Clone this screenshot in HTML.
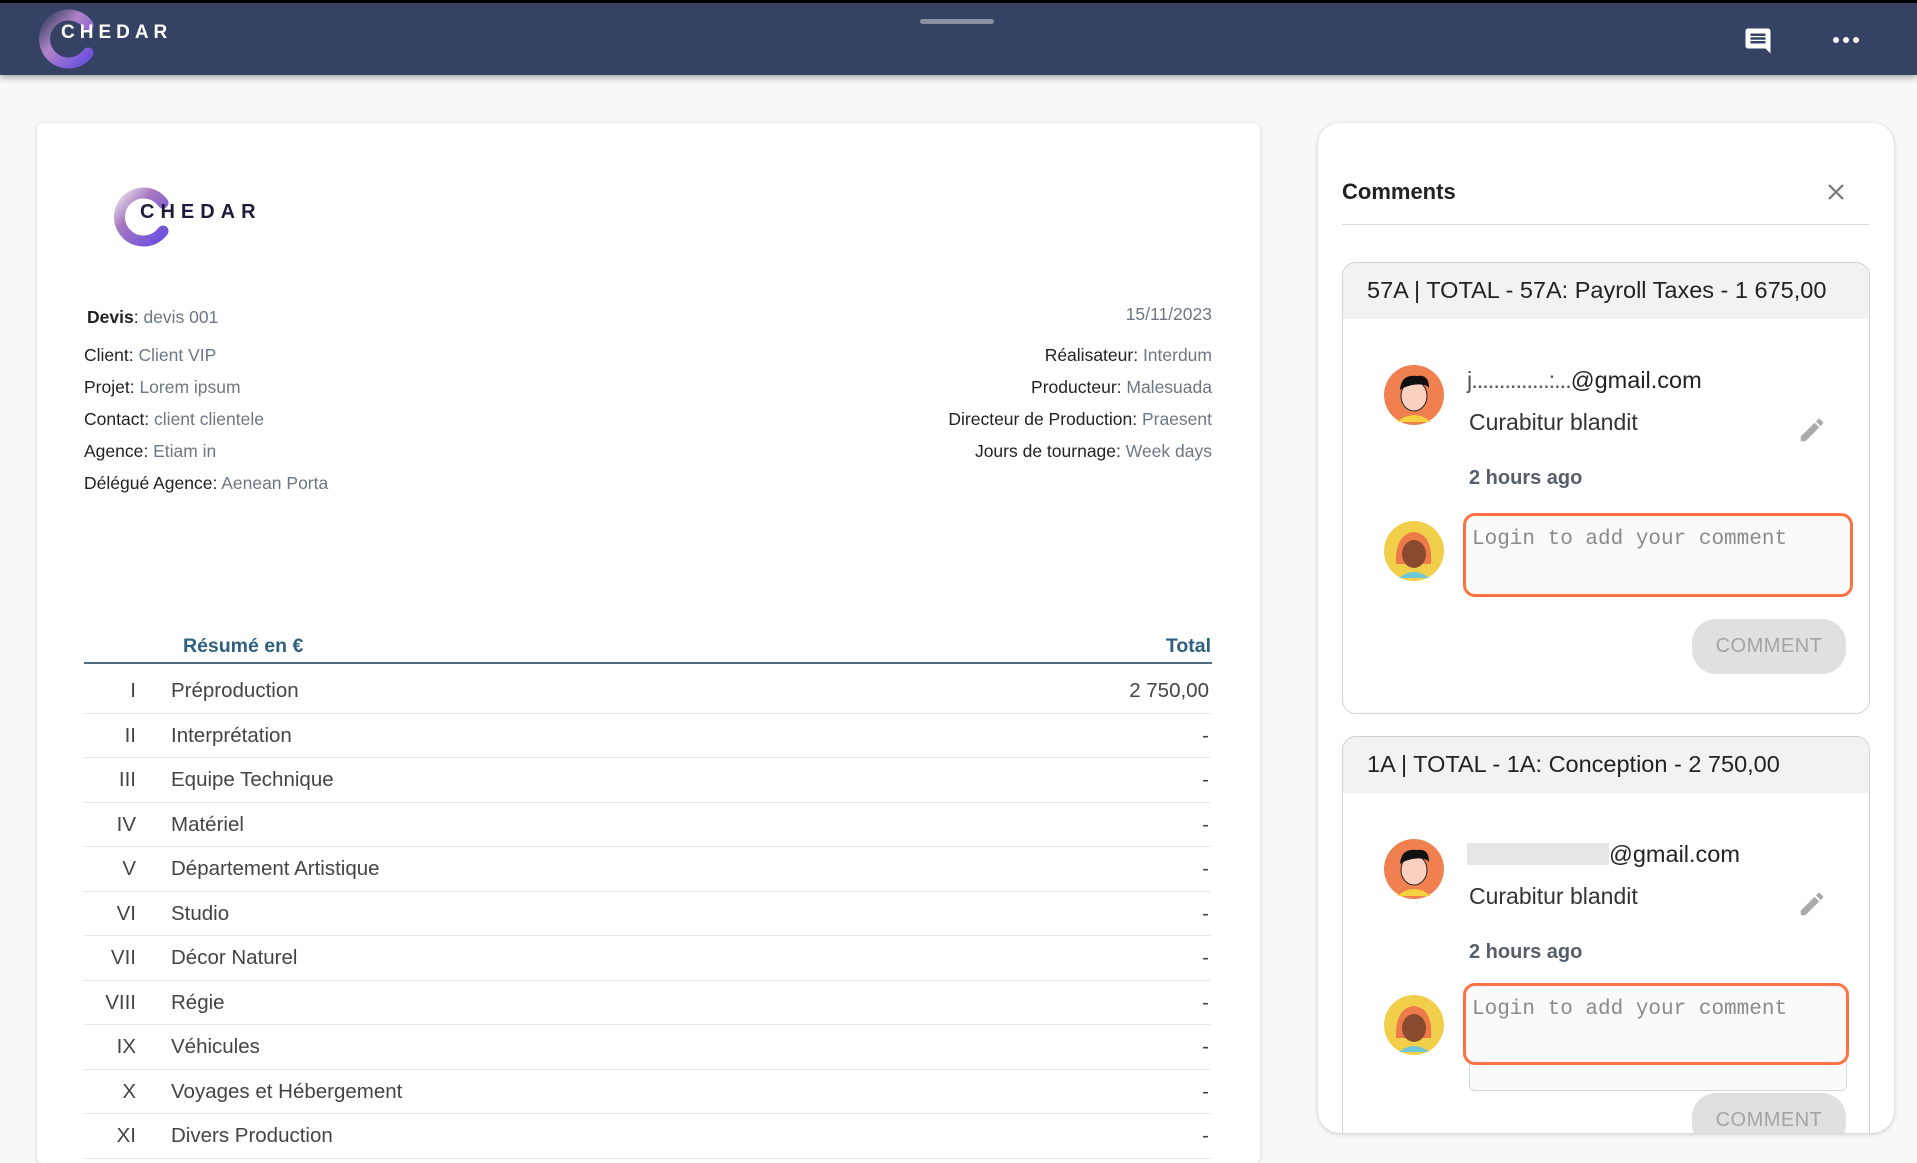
<!DOCTYPE html>
<html><head><meta charset="utf-8"><style>
*{margin:0;padding:0;box-sizing:border-box}
body{width:1917px;height:1142px;overflow:hidden;background:#f8f8f8;font-family:"Liberation Sans",Arial,sans-serif;position:relative;color:#222}
.a{position:absolute;white-space:nowrap}
.hdr{position:absolute;left:0;top:0;width:1917px;height:75px;background:#364263;border-top:3px solid #000;box-shadow:0 3px 6px rgba(0,0,0,.3)}
.card{position:absolute;left:37px;top:123px;width:1223px;height:1040px;background:#fff;border-radius:6px;box-shadow:0 1px 4px rgba(0,0,0,.15)}
.meta{font-size:17.5px;color:#222}
.meta span{color:#6b7785}
.row{position:absolute;left:84px;width:1127px;height:44.5px;border-bottom:1px solid #e6e6e6;font-size:20.5px;color:#444}
.row .n{position:absolute;right:1075px;top:10px}
.row .l{position:absolute;left:87px;top:10px}
.row .t{position:absolute;right:2px;top:10px}
.panel{position:absolute;left:1318px;top:123px;width:576px;height:1010px;background:#fff;border-radius:22px;box-shadow:0 1px 5px rgba(0,0,0,.2);overflow:hidden}
.cc{position:absolute;left:24px;width:528px;height:452px;border:1px solid #d0d0d0;border-radius:14px;overflow:hidden;background:#fff}
.ch{height:56px;background:#f2f2f2;font-size:23.5px;padding:14px 0 0 24px;color:#222}
.inp{position:absolute;left:120px;width:390px;height:84px;border:3.5px solid #ff7043;border-radius:12px;background:#fafafa;font-family:"Liberation Mono",monospace;font-size:21px;color:#8a8a8a;padding:12px 0 0 6px}
.btn{position:absolute;left:349px;width:154px;height:55px;border-radius:24px;background:#e0e0e0;color:#a4a4a4;font-size:20px;text-align:center;line-height:55px;letter-spacing:.5px}
</style></head><body>
<div class="hdr">
 <svg class="a" style="left:36px;top:4px" width="60" height="64" viewBox="0 0 60 64"><defs><linearGradient id="g1" x1="0" y1="0" x2="1" y2="1"><stop offset="0" stop-color="#3a4466"/><stop offset=".4" stop-color="#b083c8"/><stop offset="1" stop-color="#6a4fe0"/></linearGradient></defs><path d="M52 18 A24 24 0 1 0 52 46" fill="none" stroke="url(#g1)" stroke-width="11" stroke-linecap="round"/></svg>
 <div class="a" style="left:61px;top:19px;color:#fff;font-size:19px;font-weight:bold;letter-spacing:5px">CHEDAR</div>
 <div class="a" style="left:920px;top:16px;width:74px;height:5px;border-radius:3px;background:#8a90a0"></div>
 <svg class="a" style="left:1743px;top:23px" width="30" height="30" viewBox="0 0 24 24"><path fill="#fff" d="M21.99 4c0-1.1-.89-2-1.99-2H4c-1.1 0-2 .9-2 2v12c0 1.1.9 2 2 2h14l4 4-.01-18zM18 14H6v-2h12v2zm0-3H6V9h12v2zm0-3H6V6h12v2z"/></svg>
 <svg class="a" style="left:1832px;top:32px" width="28" height="10"><circle cx="4" cy="5" r="3" fill="#fff"/><circle cx="14" cy="5" r="3" fill="#fff"/><circle cx="24" cy="5" r="3" fill="#fff"/></svg>
</div>

<div class="card">
 <svg class="a" style="left:71px;top:62px" width="66" height="64" viewBox="0 0 60 64"><defs><linearGradient id="g2" x1="0" y1="0" x2="1" y2="1"><stop offset="0" stop-color="#e8e0f0"/><stop offset=".35" stop-color="#a878c0"/><stop offset="1" stop-color="#6a4fe0"/></linearGradient></defs><path d="M52 18 A24 24 0 1 0 52 46" fill="none" stroke="url(#g2)" stroke-width="11" stroke-linecap="round"/></svg>
 <div class="a" style="left:103px;top:78px;color:#1e1a3a;font-size:20px;font-weight:bold;letter-spacing:6px">CHEDAR</div>
 <div class="a meta" style="left:50px;top:184px"><b>Devis</b>: <span>devis 001</span></div>
 <div class="a meta" style="left:47px;top:222px">Client: <span>Client VIP</span></div>
 <div class="a meta" style="left:47px;top:254px">Projet: <span>Lorem ipsum</span></div>
 <div class="a meta" style="left:47px;top:286px">Contact: <span>client clientele</span></div>
 <div class="a meta" style="left:47px;top:318px">Agence: <span>Etiam in</span></div>
 <div class="a meta" style="left:47px;top:350px">Délégué Agence: <span>Aenean Porta</span></div>
 <div class="a meta" style="right:48px;top:181px"><span>15/11/2023</span></div>
 <div class="a meta" style="right:48px;top:222px">Réalisateur: <span>Interdum</span></div>
 <div class="a meta" style="right:48px;top:254px">Producteur: <span>Malesuada</span></div>
 <div class="a meta" style="right:48px;top:286px">Directeur de Production: <span>Praesent</span></div>
 <div class="a meta" style="right:48px;top:318px">Jours de tournage: <span>Week days</span></div>
 <div class="a" style="left:146px;top:512px;font-size:19.5px;font-weight:bold;color:#2f6080">Résumé en €</div>
 <div class="a" style="right:49px;top:512px;font-size:19.5px;font-weight:bold;color:#2f6080">Total</div>
 <div class="a" style="left:47px;top:539px;width:1128px;height:2px;background:#4d6a80"></div>
 <div style="position:absolute;left:-37px;top:546px">
 <div class="row" style="top:0"><span class="n">I</span><span class="l">Préproduction</span><span class="t">2 750,00</span></div>
 <div class="row" style="top:44.5px"><span class="n">II</span><span class="l">Interprétation</span><span class="t">-</span></div>
 <div class="row" style="top:89px"><span class="n">III</span><span class="l">Equipe Technique</span><span class="t">-</span></div>
 <div class="row" style="top:133.5px"><span class="n">IV</span><span class="l">Matériel</span><span class="t">-</span></div>
 <div class="row" style="top:178px"><span class="n">V</span><span class="l">Département Artistique</span><span class="t">-</span></div>
 <div class="row" style="top:222.5px"><span class="n">VI</span><span class="l">Studio</span><span class="t">-</span></div>
 <div class="row" style="top:267px"><span class="n">VII</span><span class="l">Décor Naturel</span><span class="t">-</span></div>
 <div class="row" style="top:311.5px"><span class="n">VIII</span><span class="l">Régie</span><span class="t">-</span></div>
 <div class="row" style="top:356px"><span class="n">IX</span><span class="l">Véhicules</span><span class="t">-</span></div>
 <div class="row" style="top:400.5px"><span class="n">X</span><span class="l">Voyages et Hébergement</span><span class="t">-</span></div>
 <div class="row" style="top:445px"><span class="n">XI</span><span class="l">Divers Production</span><span class="t">-</span></div>
 </div>
</div>

<div class="panel">
 <div class="a" style="left:24px;top:56px;font-size:22px;font-weight:bold;color:#222">Comments</div>
 <svg class="a" style="left:508px;top:59px" width="20" height="20"><path d="M3 3L17 17M17 3L3 17" stroke="#777" stroke-width="2.2"/></svg>
 <div class="a" style="left:24px;top:101px;width:527px;height:1px;background:#d8d8d8"></div>

 <div class="cc" style="top:139px">
  <div class="ch">57A | TOTAL - 57A: Payroll Taxes - 1 675,00</div>
  <svg class="a" style="left:40px;top:101px" width="62" height="62"><circle cx="31" cy="31" r="30" fill="#f08050"/><path d="M14 58 Q31 44 48 58" fill="#f5d040"/><ellipse cx="31" cy="32" rx="13" ry="15" fill="#fbd0c0" stroke="#222"/><path d="M17 26 Q18 10 34 12 Q46 10 46 24 L44 22 Q34 18 20 24Z" fill="#111"/></svg>
  <div class="a" style="left:124px;top:104px;font-size:23.5px;color:#222"><span style="color:#555;letter-spacing:-1px">j..............:...</span>@gmail.com</div>
  <div class="a" style="left:126px;top:146px;font-size:23px;color:#333">Curabitur blandit</div>
  <svg class="a" style="left:454px;top:152px" width="30" height="30" viewBox="0 0 24 24"><path fill="#aaa" d="M3 17.25V21h3.75L17.81 9.94l-3.75-3.75L3 17.25zM20.71 7.04a1 1 0 0 0 0-1.41l-2.34-2.34a1 1 0 0 0-1.41 0l-1.83 1.83 3.75 3.75 1.83-1.83z"/></svg>
  <div class="a" style="left:126px;top:204px;font-size:20px;font-weight:bold;color:#555f6c">2 hours ago</div>
  <svg class="a" style="left:40px;top:257px" width="62" height="62"><circle cx="31" cy="31" r="30" fill="#f2cf4a"/><path d="M16 58 Q31 46 46 58" fill="#6cc8d8"/><path d="M13 44 Q12 14 31 12 Q50 14 48 44Z" fill="#ee7a4a"/><ellipse cx="31" cy="34" rx="12" ry="14" fill="#8a4a30"/></svg>
  <div class="inp" style="top:250px">Login to add your comment</div>
  <div class="btn" style="top:356px">COMMENT</div>
 </div>

 <div class="cc" style="top:613px;height:460px">
  <div class="ch">1A | TOTAL - 1A: Conception - 2 750,00</div>
  <svg class="a" style="left:40px;top:101px" width="62" height="62"><circle cx="31" cy="31" r="30" fill="#f08050"/><path d="M14 58 Q31 44 48 58" fill="#f5d040"/><ellipse cx="31" cy="32" rx="13" ry="15" fill="#fbd0c0" stroke="#222"/><path d="M17 26 Q18 10 34 12 Q46 10 46 24 L44 22 Q34 18 20 24Z" fill="#111"/></svg>
  <div class="a" style="left:124px;top:104px;font-size:23.5px;color:#222"><span style="display:inline-block;width:142px;height:22px;background:#e6e6e6;vertical-align:-3px"></span>@gmail.com</div>
  <div class="a" style="left:126px;top:146px;font-size:23px;color:#333">Curabitur blandit</div>
  <svg class="a" style="left:454px;top:152px" width="30" height="30" viewBox="0 0 24 24"><path fill="#aaa" d="M3 17.25V21h3.75L17.81 9.94l-3.75-3.75L3 17.25zM20.71 7.04a1 1 0 0 0 0-1.41l-2.34-2.34a1 1 0 0 0-1.41 0l-1.83 1.83 3.75 3.75 1.83-1.83z"/></svg>
  <div class="a" style="left:126px;top:204px;font-size:20px;font-weight:bold;color:#555f6c">2 hours ago</div>
  <svg class="a" style="left:40px;top:257px" width="62" height="62"><circle cx="31" cy="31" r="30" fill="#f2cf4a"/><path d="M16 58 Q31 46 46 58" fill="#6cc8d8"/><path d="M13 44 Q12 14 31 12 Q50 14 48 44Z" fill="#ee7a4a"/><ellipse cx="31" cy="34" rx="12" ry="14" fill="#8a4a30"/></svg>
  <div class="a" style="left:126px;top:262px;width:378px;height:92px;border:1px solid #d0d8e0;border-radius:6px;background:#fafafa"></div>
  <div class="inp" style="top:246px;width:386px;height:82px">Login to add your comment</div>
  <div class="btn" style="top:356px">COMMENT</div>
 </div>
</div>
</body></html>
